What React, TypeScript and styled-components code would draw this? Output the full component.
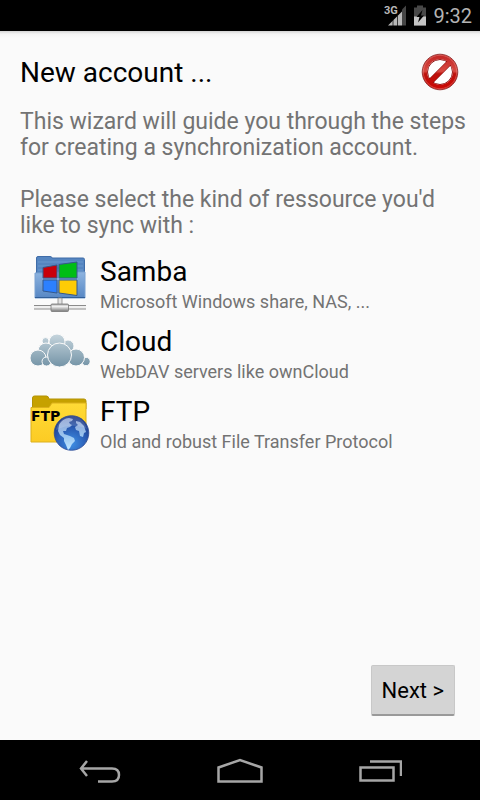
import React from "react";
import styled, { createGlobalStyle } from "styled-components";

const GlobalStyle = createGlobalStyle`
  *, *::before, *::after { box-sizing: border-box; }
  body {
    margin: 0;
    background: #fafafa;
    font-family: Roboto, "Liberation Sans", sans-serif;
  }
`;

const Screen = styled.div`
  display: flex;
  flex-direction: column;
  min-height: 100vh;
`;

const StatusBar = styled.div`
  display: flex;
  align-items: center;
  justify-content: flex-end;
  gap: 6px;
  height: 31px;
  padding: 0 8px;
  background: #000;
  color: #b4b4b4;
  font-size: 20px;
  line-height: 31px;
`;

const Clock = styled.time`
  padding-top: 1px;
`;

const Wizard = styled.main`
  display: flex;
  flex: 1;
  flex-direction: column;
  padding: 22px 12px 24px 20px;
  background: linear-gradient(#d4d4d4, #f4f4f4 3px, #fafafa 7px);
`;

const Header = styled.header`
  display: flex;
  align-items: center;
  justify-content: space-between;
  height: 38px;
  padding-right: 9px;
`;

const Title = styled.h1`
  margin: 0;
  padding-top: 2px;
  color: #000;
  font-size: 28px;
  font-weight: 400;
  line-height: 32px;
`;

const IconButton = styled.button`
  display: flex;
  padding: 0;
  border: 0;
  background: none;
`;

const Intro = styled.div`
  display: flex;
  flex-direction: column;
  gap: 26px;
  padding-top: 18px;
  color: #737373;
  font-size: 23px;
  line-height: 26px;
`;

const Paragraph = styled.p`
  margin: 0;
`;

const ResourceList = styled.ul`
  display: flex;
  flex-direction: column;
  gap: 10px;
  margin: 0;
  padding: 15px 10px 0;
  list-style: none;
`;

const Resource = styled.button`
  display: flex;
  gap: 10px;
  width: 100%;
  padding: 0;
  border: 0;
  background: none;
  font-family: inherit;
  text-align: left;
`;

const ResourceText = styled.span`
  display: flex;
  flex-direction: column;
`;

const ResourceName = styled.span`
  color: #000;
  font-size: 28px;
  line-height: 36px;
`;

const ResourceHint = styled.span`
  color: #737373;
  font-size: 18px;
  line-height: 24px;
`;

const Actions = styled.div`
  display: flex;
  justify-content: flex-end;
  margin-top: auto;
  padding-right: 13px;
`;

const NextButton = styled.button`
  height: 51px;
  padding: 0 10px;
  border: 1px solid #c8c8c8;
  border-bottom: 2px solid #999;
  border-radius: 2px;
  background: #d4d4d4;
  color: #000;
  font-family: inherit;
  font-size: 22px;
`;

const NavBar = styled.nav`
  display: flex;
  height: 60px;
  padding: 0 30px;
  background: #000;
`;

const NavButton = styled.button`
  display: flex;
  flex: 1;
  align-items: center;
  justify-content: center;
  padding: 0;
  border: 0;
  background: none;
`;

const SignalIcon = () => (
  <svg width="24" height="22" viewBox="0 0 24 22" aria-label="3G signal">
    <text x="1" y="9" fontSize="11" fontWeight="700" fontFamily="Roboto" fill="#b8b8b8">3G</text>
    <path d="M19 4.500 23 .5v20h-4z" fill="#454545" />
    <path d="M5 20.500 19 6.500v14z" fill="#b8b8b8" />
    <path d="M10 15v6M14.500 11v10" stroke="#000" strokeWidth=".7" />
  </svg>
);

const BatteryIcon = () => (
  <svg width="14" height="22" viewBox="0 0 14 22" aria-label="Battery charging">
    <path d="M1 2.500h3V.5h6v2h3v18H1z" fill="#484848" />
    <path d="M1 11.500h12v9H1z" fill="#c4c4c4" />
    <path d="M9.500 5 3.500 12h3L5 17.500 11 10.500H8z" fill="#000" />
  </svg>
);

const CancelIcon = () => (
  <svg width="38" height="38" viewBox="0 0 38 38">
    <defs>
      <linearGradient id="cancelRed" gradientUnits="userSpaceOnUse" x1="0" y1="1" x2="0" y2="37">
        <stop offset="0" stopColor="#c02323" />
        <stop offset=".48" stopColor="#d84a42" />
        <stop offset=".55" stopColor="#bd120d" />
        <stop offset="1" stopColor="#cc0805" />
      </linearGradient>
    </defs>
    <circle cx="19" cy="19" r="17" fill="#fff" />
    <circle cx="19" cy="19" r="12.500" fill="none" stroke="#8a1010" />
    <path d="M9.500 28.500 28.500 9.500" stroke="#8a1010" strokeWidth="6" />
    <circle cx="19" cy="19" r="15.200" fill="none" stroke="url(#cancelRed)" strokeWidth="4.800" />
    <path d="M9 29 29 9" stroke="url(#cancelRed)" strokeWidth="4.800" />
    <circle cx="19" cy="19" r="17.800" fill="none" stroke="#851717" strokeWidth=".8" />
    <circle cx="19" cy="19" r="16.700" fill="none" stroke="#f19a92" strokeOpacity=".5" strokeWidth=".8" />
  </svg>
);

const SambaIcon = () => (
  <svg width="60" height="60" viewBox="0 0 60 60" aria-hidden="true">
    <defs>
      <linearGradient id="folderFront" x1="0" y1="0" x2="0" y2="1">
        <stop offset="0" stopColor="#8eb4e0" />
        <stop offset="1" stopColor="#5787c4" />
      </linearGradient>
      <linearGradient id="metal" x1="0" y1="0" x2="0" y2="1">
        <stop offset="0" stopColor="#999" />
        <stop offset=".3" stopColor="#f5f5f5" />
        <stop offset="1" stopColor="#777" />
      </linearGradient>
    </defs>
    <path d="M6.500 22V4q0-1.500 1.500-1.500h12q2 0 2 1.500h31q1.500 0 1.500 1.500V22z" fill="#5585c0" stroke="#3f6ca8" />
    <path d="M8 8h45M8 12h45M8 16h45" stroke="#6b98ce" />
    <path d="M5 19h17l3-1h30v26H5z" fill="url(#folderFront)" stroke="#7ba2d2" />
    <path d="M5 43.500h50" stroke="#315f99" />
    <path d="M13 13.500 27 11v13H13z" fill="#c8000a" stroke="#36598b" />
    <path d="M29 10.500 47 8v16H29z" fill="#00bd16" stroke="#36598b" />
    <path d="M13 26h14v13l-14-2z" fill="#2c80ff" stroke="#36598b" />
    <path d="M29 26h18v15.500l-18-2.500z" fill="#ffcc05" stroke="#36598b" />
    <path d="M28 44h4v7h-4z" fill="#e4e4e4" stroke="#888" strokeWidth=".8" />
    <path d="M4 51.500h52v3H4z" fill="#efefef" />
    <path d="M4 51.500h52M4 55h52" stroke="#8b8b8b" />
    <rect x="21" y="50" width="17.500" height="7.500" rx="1" fill="url(#metal)" stroke="#777" strokeWidth=".8" />
  </svg>
);

const cloudPuffs = [
  [15.5, 17, 3.5],
  [38, 22, 6],
  [27, 18, 8],
  [16, 27, 8],
  [8, 34, 8],
  [16.5, 37.5, 4.5],
  [56, 37.5, 4.2],
  [46, 33.5, 8.5],
  [29.5, 31, 12],
];

const CloudIcon = () => (
  <svg width="60" height="60" viewBox="0 0 60 60" aria-hidden="true">
    <defs>
      <linearGradient id="cloudFill" gradientUnits="userSpaceOnUse" x1="0" y1="10" x2="0" y2="43">
        <stop offset="0" stopColor="#c6d5dd" />
        <stop offset="1" stopColor="#7393a6" />
      </linearGradient>
    </defs>
    {cloudPuffs.map(([cx, cy, r]) => (
      <circle key={`${cx}-${cy}`} cx={cx} cy={cy} r={r} fill="url(#cloudFill)" stroke="#fafafa" strokeWidth="1" />
    ))}
  </svg>
);

const FtpIcon = () => (
  <svg width="60" height="60" viewBox="0 0 60 60" aria-hidden="true">
    <defs>
      <linearGradient id="ftpFolder" x1="0" y1="0" x2="0" y2="1">
        <stop offset="0" stopColor="#ffdb36" />
        <stop offset="1" stopColor="#fccb24" />
      </linearGradient>
      <radialGradient id="globe" cx=".5" cy=".8" r=".8">
        <stop offset="0" stopColor="#3f8fe4" />
        <stop offset=".55" stopColor="#2a5cb4" />
        <stop offset="1" stopColor="#182f7a" />
      </radialGradient>
      <linearGradient id="land" x1="0" y1="0" x2="0" y2="1">
        <stop offset="0" stopColor="#8c9fd0" />
        <stop offset=".6" stopColor="#9cc8f2" />
        <stop offset="1" stopColor="#c4e8ff" />
      </linearGradient>
    </defs>
    <path d="M2.500 15V4q0-2 2-2h12q2 0 2.500 3h35q2 0 2 2v8z" fill="#c6a100" stroke="#b39305" />
    <path d="M1 13.500h18l3-4.500h34v39H1z" fill="url(#ftpFolder)" stroke="#dcb01c" />
    <text x="1" y="27" fontFamily="DejaVu Sans" fontSize="14" fontWeight="700" fill="#000">FTP</text>
    <circle cx="41.500" cy="39" r="17.300" fill="url(#globe)" stroke="#2c4a94" strokeWidth=".8" />
    <path
      d="M29 31c2-4 6-7 10-7l4 1-1 2-3 1 1 2 2 1-2 2-3 1-1 3-3 0 1 3 3 1 3 1 4 2 1 3-3 3-2 4-2 2-2-5-2-4 0-3-4-3-2-4zM46 27l4 1 4 4 2 6-2 1-1 4-3-1-1-5-3-1-1-3 3-2-2-2z"
      fill="url(#land)"
    />
    <path d="M26 36C28 26 35 22 42 22s13 5 15 13c-10-5-21-4-31 1z" fill="#fff" fillOpacity=".15" />
  </svg>
);

const BackIcon = () => (
  <svg width="44" height="26" viewBox="0 0 44 26" fill="none" stroke="#a6a6a6" strokeWidth="2.500">
    <path d="M9 4 3 11.500 9 19M3 11.500h31q7 0 7 6.500t-7 6.500H20" />
  </svg>
);

const HomeIcon = () => (
  <svg width="48" height="28" viewBox="0 0 48 28" fill="none" stroke="#a6a6a6" strokeWidth="2.500">
    <path d="M2.500 11.500 24 4l21.500 7.500v14h-43z" />
  </svg>
);

const RecentsIcon = () => (
  <svg width="44" height="24" viewBox="0 0 44 24" fill="none" stroke="#a6a6a6" strokeWidth="2.500">
    <path d="M2.500 9.500h33v13h-33zM12 3.500h31v14.500" />
  </svg>
);

const resources = [
  { name: "Samba", hint: "Microsoft Windows share, NAS, ...", Icon: SambaIcon },
  { name: "Cloud", hint: "WebDAV servers like ownCloud", Icon: CloudIcon },
  { name: "FTP", hint: "Old and robust File Transfer Protocol", Icon: FtpIcon },
];

export default function App() {
  return (
    <Screen>
      <GlobalStyle />
      <StatusBar>
        <SignalIcon />
        <BatteryIcon />
        <Clock>9:32</Clock>
      </StatusBar>
      <Wizard>
        <Header>
          <Title>New account ...</Title>
          <IconButton type="button" aria-label="Cancel">
            <CancelIcon />
          </IconButton>
        </Header>
        <Intro>
          <Paragraph>This wizard will guide you through the steps for creating a synchronization account.</Paragraph>
          <Paragraph>Please select the kind of ressource you'd like to sync with :</Paragraph>
        </Intro>
        <ResourceList>
          {resources.map(({ name, hint, Icon }) => (
            <li key={name}>
              <Resource type="button">
                <Icon />
                <ResourceText>
                  <ResourceName>{name}</ResourceName>
                  <ResourceHint>{hint}</ResourceHint>
                </ResourceText>
              </Resource>
            </li>
          ))}
        </ResourceList>
        <Actions>
          <NextButton type="button">Next &gt;</NextButton>
        </Actions>
      </Wizard>
      <NavBar>
        <NavButton type="button" aria-label="Back"><BackIcon /></NavButton>
        <NavButton type="button" aria-label="Home"><HomeIcon /></NavButton>
        <NavButton type="button" aria-label="Recent apps"><RecentsIcon /></NavButton>
      </NavBar>
    </Screen>
  );
}
